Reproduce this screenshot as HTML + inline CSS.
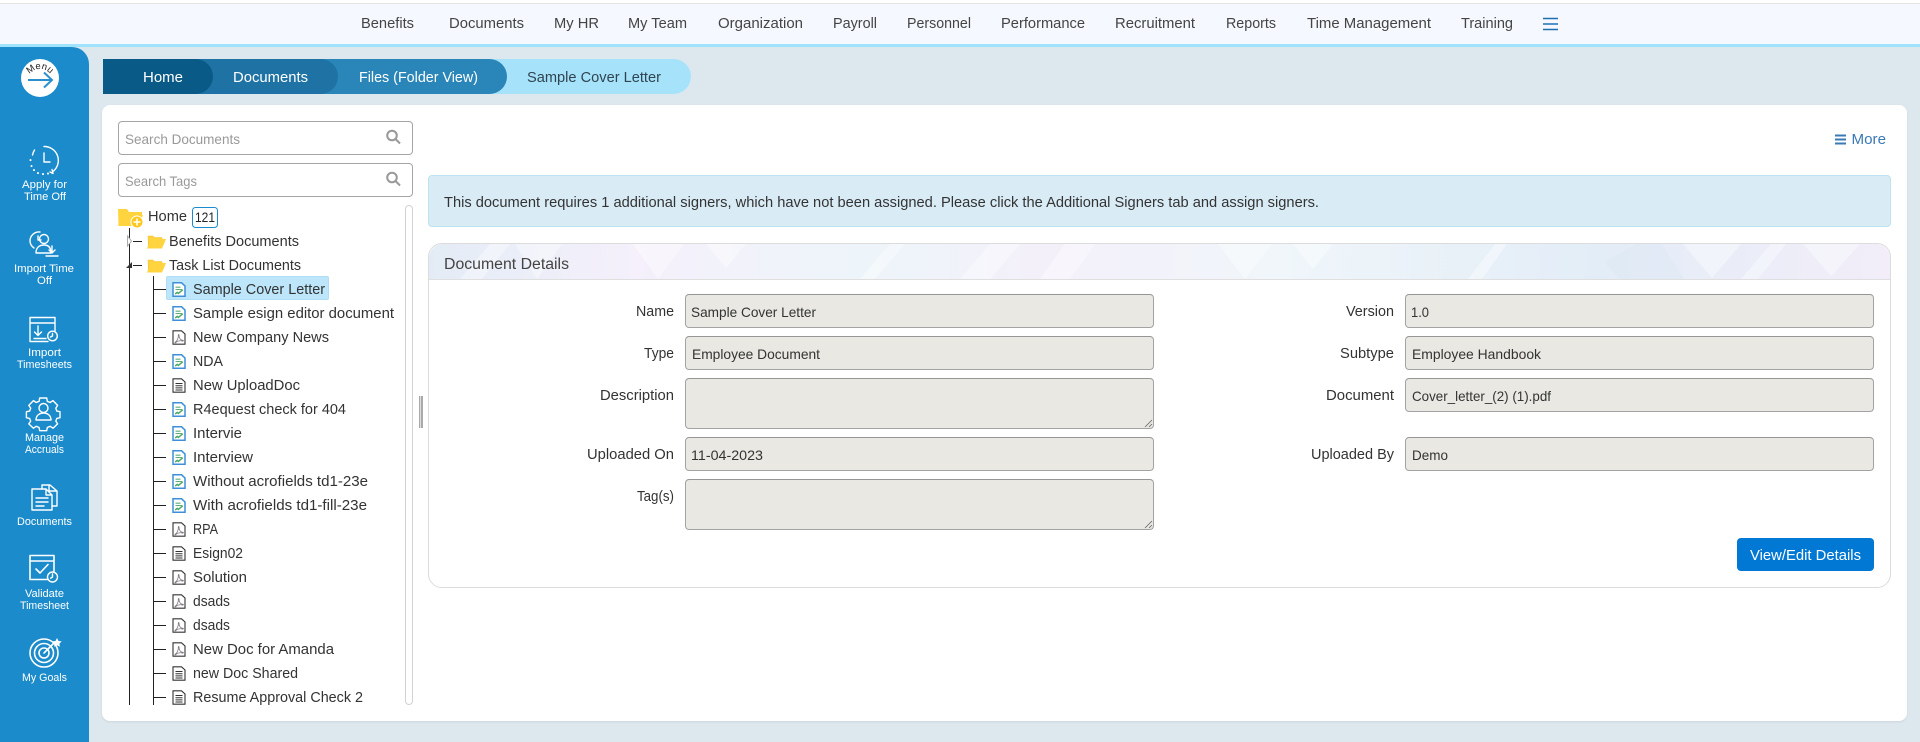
<!DOCTYPE html>
<html lang="en"><head><meta charset="utf-8"><title>Sample Cover Letter</title>
<style>
*{box-sizing:border-box}
html,body{margin:0;padding:0;width:1920px;height:742px;overflow:hidden;background:#dde8ee;font-family:"Liberation Sans",sans-serif}
div{position:absolute}
.in{background:#e9e8e3;border:1px solid #a3a3a3;border-top-color:#969696;border-radius:4px}
.se{background:#fff;border:1px solid #a5a5a5;border-radius:4px;left:118px;width:295px;height:34px}
svg{position:absolute;left:0;top:0}
text{font-family:"Liberation Sans",sans-serif}
</style></head><body>
<div style="left:0;top:0;width:1920px;height:4px;background:#fff;border-bottom:1px solid #e3e3e3"></div>
<div style="left:0;top:4px;width:1920px;height:40px;background:#f5f8fe"></div>
<div style="left:0;top:44px;width:1920px;height:3px;background:#a0e3ff"></div>
<div style="left:0;top:47px;width:89px;height:695px;background:#1b8bcb;border-top-right-radius:17px"></div>
<div style="left:490px;top:59px;width:201px;height:35px;background:#a6e3fb;border-radius:0 18px 18px 0"></div>
<div style="left:320px;top:59px;width:187px;height:35px;background:#2a85b8;border-radius:0 18px 18px 0"></div>
<div style="left:190px;top:59px;width:148px;height:35px;background:#1f73a4;border-radius:0 18px 18px 0"></div>
<div style="left:103px;top:59px;width:110px;height:35px;background:#0a5a87;border-radius:0 18px 18px 0"></div>
<div style="left:102px;top:105px;width:1805px;height:616px;background:#fff;border-radius:8px;box-shadow:0 1px 2px rgba(0,0,0,.08)"></div>
<div class="se" style="top:121px"></div><div class="se" style="top:163px"></div>
<div style="left:405px;top:205px;width:8px;height:500px;background:#fff;border:1px solid #d2d2d2;border-radius:4px"></div>
<div style="left:419px;top:396px;width:4px;height:32px;border-left:1px solid #aaa;border-right:2px solid #aaa;background:#ddd"></div>
<div style="left:166px;top:276px;width:163px;height:24px;background:#bde6fb;border:1px solid #aeddf5;border-radius:2px"></div>
<div style="left:428px;top:175px;width:1463px;height:52px;background:#d9ecf6;border:1px solid #bde3ee;border-radius:4px"></div>
<div style="left:428px;top:243px;width:1463px;height:345px;background:#fff;border:1px solid #dcdcdc;border-radius:14px"></div>
<div class="in" style="left:685px;top:294px;width:469px;height:34px"></div>
<div class="in" style="left:685px;top:336px;width:469px;height:34px"></div>
<div class="in" style="left:685px;top:378px;width:469px;height:51px"></div>
<div class="in" style="left:685px;top:437px;width:469px;height:34px"></div>
<div class="in" style="left:685px;top:479px;width:469px;height:51px"></div>
<div class="in" style="left:1405px;top:294px;width:469px;height:34px"></div>
<div class="in" style="left:1405px;top:336px;width:469px;height:34px"></div>
<div class="in" style="left:1405px;top:378px;width:469px;height:34px"></div>
<div class="in" style="left:1405px;top:437px;width:469px;height:34px"></div>
<div style="left:1737px;top:538px;width:137px;height:33px;background:#0078d4;border-radius:4px"></div>

<svg width="1920" height="742" viewBox="0 0 1920 742">
<defs>
<linearGradient id="hg" x1="0" x2="1" y1="0" y2="0"><stop offset="0" stop-color="#e3ecf6"/><stop offset=".14" stop-color="#f5f0fb"/><stop offset=".3" stop-color="#edf5fa"/><stop offset=".42" stop-color="#f4f0fa"/><stop offset=".58" stop-color="#f0f6fa"/><stop offset=".8" stop-color="#e3edf7"/><stop offset="1" stop-color="#f2edf9"/></linearGradient>
<clipPath id="hc"><path d="M429 279V258a14 14 0 0 1 14-14H1876a14 14 0 0 1 14 14V279Z"/></clipPath>
<clipPath id="tc"><rect x="100" y="200" width="300" height="505"/></clipPath>
<symbol id="g" viewBox="0 0 14 15"><path d="M1 .8h8.500L13 4v10.200H1Z" fill="#fff" stroke="#3e8fd8" stroke-width="1.500"/><path d="M3.500 5.200h5M3.500 7.500h7" stroke="#5cae7a" stroke-width="1.100"/><path d="M3.200 12l2-1.600 1.200 1 4.300-3.600" fill="none" stroke="#4fa864" stroke-width="1.500"/></symbol>
<symbol id="p" viewBox="0 0 14 15"><path d="M1 .8h8.500L13 4v10.200H1Z" fill="#fff" stroke="#333" stroke-width="1.100"/><path d="M3 12.300c2-1 3.500-4 3.300-7-.1-1.200 1-.9.8.4-.3 2.200 1.700 4.600 3.900 4.600.6 0 .5.900-.4.800C7.800 10.300 5 11.300 3.200 13Z" fill="none" stroke="#7d7880" stroke-width=".8"/></symbol>
<symbol id="d" viewBox="0 0 14 15"><path d="M1 .8h8.500L13 4v10.200H1Z" fill="#fff" stroke="#333" stroke-width="1.100"/><path d="M3.500 5.500h7M3.500 7.700h7M3.500 9.900h7M3.500 12h7" stroke="#333"/></symbol>
<symbol id="f" viewBox="0 0 19 15"><path d="M1.500 14L1 2h5l1 1.500h8V6" fill="#ffd43f" stroke="#f0bd28" stroke-width=".5"/><path d="M0 14.500 4 5h15l-4 9.500Z" fill="#ffd43f"/></symbol>
</defs>

<!-- panel header -->
<g clip-path="url(#hc)"><rect x="429" y="244" width="1461" height="35" fill="url(#hg)"/><g fill="#fff" fill-opacity=".38"><path d="M460 279l30-35h20l-28 35Z"/><path d="M515 244l22 35 25-35Z"/><path d="M633 244h51l-26 35Z"/><path d="M706 244h40l-20 24Z"/><path d="M860 279l30-35h15l-30 35Z"/><path d="M960 279l30-35h30l-30 35Z"/><path d="M1040 279l25-35h30l-25 35Z"/><path d="M1218 244h54l-27 35Z"/><path d="M1293 244h40l-20 25Z"/><path d="M1468 279l27-35h12l-25 35Z"/><path d="M1683 244h58l-29 34Z"/><path d="M1741 279l30-35h15l-28 35Z"/><path d="M1803 244h57l-29 32Z"/></g><g fill="#d6e4f2" fill-opacity=".3"><path d="M1620 279l-16-17 32-18h26l22 35Z"/></g></g>
<path d="M429 279.500H1890" stroke="#dfdfdf"/>

<!-- nav -->
<g font-size="14.500" fill="#444">
<text lengthAdjust="spacingAndGlyphs" x="361" y="28" textLength="53">Benefits</text><text lengthAdjust="spacingAndGlyphs" x="449" y="28" textLength="75">Documents</text><text lengthAdjust="spacingAndGlyphs" x="554" y="28" textLength="45">My HR</text><text lengthAdjust="spacingAndGlyphs" x="628" y="28" textLength="59">My Team</text><text lengthAdjust="spacingAndGlyphs" x="718" y="28" textLength="85">Organization</text><text lengthAdjust="spacingAndGlyphs" x="833" y="28" textLength="44">Payroll</text><text lengthAdjust="spacingAndGlyphs" x="907" y="28" textLength="64">Personnel</text><text lengthAdjust="spacingAndGlyphs" x="1001" y="28" textLength="84">Performance</text><text lengthAdjust="spacingAndGlyphs" x="1115" y="28" textLength="80">Recruitment</text><text lengthAdjust="spacingAndGlyphs" x="1226" y="28" textLength="50">Reports</text><text lengthAdjust="spacingAndGlyphs" x="1307" y="28" textLength="124">Time Management</text><text lengthAdjust="spacingAndGlyphs" x="1461" y="28" textLength="52">Training</text>
</g>
<path d="M1543 18.500h15M1543 24h15M1543 29.500h15" stroke="#1f6fb0" stroke-width="1.500"/>

<!-- breadcrumb -->
<g font-size="15" fill="#fff"><text lengthAdjust="spacingAndGlyphs" x="143" y="82" textLength="40">Home</text><text lengthAdjust="spacingAndGlyphs" x="233" y="82" textLength="75">Documents</text><text lengthAdjust="spacingAndGlyphs" x="359" y="82" textLength="119">Files (Folder View)</text><text lengthAdjust="spacingAndGlyphs" x="527" y="82" textLength="134" fill="#2f4450">Sample Cover Letter</text></g>

<!-- sidebar icons -->
<circle cx="40" cy="78" r="19" fill="#fff"/>
<path id="mc" d="M28 77A13 13 0 0 1 52 77" fill="none"/>
<text font-size="9.500" fill="#222"><textPath href="#mc" startOffset="3">Menu</textPath></text>
<path d="M28 80H51M44 72.500 52 80 44 87.500" fill="none" stroke="#2a8fcf" stroke-width="2"/>
<g fill="none" stroke="#fff" stroke-width="1.400" stroke-linecap="round" stroke-linejoin="round">
<path d="M44 146.500a14 14 0 0 1 9 25M34.500 150a14 14 0 0 0-2 5" /><path d="M30.500 160v.1M31.500 166v.1M34 170v.1M38 173v.1M43 174v.1M48 173.500v.1" stroke-width="2"/><path d="M44 153v9h6M50 172l3 1.500-1-4"/>
<path d="M40 232a9 9 0 0 0-10 9 9 9 0 0 0 4 7M38 236v4h3"/><circle cx="44" cy="239" r="4.500"/><path d="M36 253c0-6 4-8 8-8s7 2 7 8Z"/><path d="M52 246v6M49 250l3 3 3-3M46 256h12"/>
<path d="M55 331v-13.500H30v24h18M30 323h25M38 326v9M34.500 332l3.500 3.500 3.500-3.500M34 338.500h12"/><circle cx="52.500" cy="336" r="4.800"/><path d="M52.500 333.500v2.500l-2 1"/>
<path d="M40.500 398.500h7l.6 3.300 2.900 1.200 2.800-1.900 4.600 4.800-1.800 2.800 1 2.900 3.200.6v6l-3.200.7-1 2.700 1.800 2.800-4.600 4.300-2.800-1.900-2.900 1.200-.6 3.200h-7l-.6-3.200-2.900-1.200-2.800 1.900-4.600-4.300 1.900-2.800-1.100-2.700-3.200-.7v-6l3.200-.6 1.100-2.900-1.900-2.800 4.600-4.800 2.800 1.900 2.900-1.200Z" transform="translate(0 -.5) translate(-.8 0)"/><circle cx="43.500" cy="408" r="4.500"/><path d="M36 420c0-5 4-7 7.500-7s7.500 2 7.500 7Z"/>
<path d="M42 489v-4h8l7 6v15h-5M49 485v6h8"/><path d="M32 489h14l6 6v15H32Z M46 489v6h6M36 498h12M36 502h12M36 506h8"/>
<path d="M54 571v-15.500H30v24h18M30 561h24M36 569l4 4 8-8.500" stroke-width="1.600"/><circle cx="52.500" cy="577" r="5"/><path d="M52.500 574v3l-1.800 1.200"/>
<circle cx="44" cy="653" r="14" stroke-width="1.600"/><circle cx="44" cy="653" r="9.500" stroke-width="1.600"/><circle cx="44" cy="653" r="5" stroke-width="1.600"/><path d="M44 653 55 642" stroke-width="1.600"/>
</g>
<path d="M57 638l1.500 3 3.200.4-2.300 2.200.5 3.200-2.900-1.500-2.900 1.500.5-3.200-2.300-2.200 3.200-.4Z" fill="#fff"/>
<g font-size="11" fill="#fff">
<text lengthAdjust="spacingAndGlyphs" x="22" y="188" textLength="45">Apply for</text><text lengthAdjust="spacingAndGlyphs" x="24" y="200" textLength="42">Time Off</text><text lengthAdjust="spacingAndGlyphs" x="14" y="272" textLength="60">Import Time</text><text lengthAdjust="spacingAndGlyphs" x="37" y="284" textLength="15">Off</text><text lengthAdjust="spacingAndGlyphs" x="28" y="356" textLength="33">Import</text><text lengthAdjust="spacingAndGlyphs" x="17" y="368" textLength="55">Timesheets</text><text lengthAdjust="spacingAndGlyphs" x="25" y="441" textLength="39">Manage</text><text lengthAdjust="spacingAndGlyphs" x="25" y="453" textLength="39">Accruals</text><text lengthAdjust="spacingAndGlyphs" x="17" y="525" textLength="55">Documents</text><text lengthAdjust="spacingAndGlyphs" x="25" y="597" textLength="39">Validate</text><text lengthAdjust="spacingAndGlyphs" x="20" y="609" textLength="49">Timesheet</text><text lengthAdjust="spacingAndGlyphs" x="22" y="681" textLength="45">My Goals</text>
</g>

<!-- search -->
<g font-size="14" fill="#999"><text lengthAdjust="spacingAndGlyphs" x="125" y="144" textLength="115">Search Documents</text><text lengthAdjust="spacingAndGlyphs" x="125" y="186" textLength="72">Search Tags</text></g>
<g fill="none" stroke="#999" stroke-width="2"><circle cx="392" cy="135.500" r="4.800"/><path d="M395.500 139 400 143.500"/><circle cx="392" cy="177.500" r="4.800"/><path d="M395.500 181 400 185.500"/></g>

<!-- tree -->
<g clip-path="url(#tc)">
<g stroke="#222" fill="none"><path d="M129.500 228V705M153.500 276V705M133 241.500h9M133 265.500h9"/><path d="M153 289.500h13M153 313.500h13M153 337.500h13M153 361.500h13M153 385.500h13M153 409.500h13M153 433.500h13M153 457.500h13M153 481.500h13M153 505.500h13M153 529.500h13M153 553.500h13M153 577.500h13M153 601.500h13M153 625.500h13M153 649.500h13M153 673.500h13M153 697.500h13"/></g>
<path d="M127.500 236v10l4-5Z" fill="#fff" stroke="#aaa"/><path d="M126 268h6v-6Z" fill="#333"/>
<use href="#f" x="147" y="234" width="19" height="15"/><use href="#f" x="147" y="258" width="19" height="15"/>
<use href="#g" x="172" y="282" width="14" height="15"/><use href="#g" x="172" y="306" width="14" height="15"/><use href="#p" x="172" y="330" width="14" height="15"/><use href="#g" x="172" y="354" width="14" height="15"/><use href="#d" x="172" y="378" width="14" height="15"/><use href="#g" x="172" y="402" width="14" height="15"/><use href="#g" x="172" y="426" width="14" height="15"/><use href="#g" x="172" y="450" width="14" height="15"/><use href="#g" x="172" y="474" width="14" height="15"/><use href="#g" x="172" y="498" width="14" height="15"/><use href="#p" x="172" y="522" width="14" height="15"/><use href="#d" x="172" y="546" width="14" height="15"/><use href="#p" x="172" y="570" width="14" height="15"/><use href="#p" x="172" y="594" width="14" height="15"/><use href="#p" x="172" y="618" width="14" height="15"/><use href="#p" x="172" y="642" width="14" height="15"/><use href="#d" x="172" y="666" width="14" height="15"/><use href="#d" x="172" y="690" width="14" height="15"/>
<g font-size="14.500" fill="#333">
<text lengthAdjust="spacingAndGlyphs" x="169" y="246" textLength="130">Benefits Documents</text><text lengthAdjust="spacingAndGlyphs" x="169" y="270" textLength="132">Task List Documents</text>
<text lengthAdjust="spacingAndGlyphs" x="193" y="294" textLength="132">Sample Cover Letter</text><text lengthAdjust="spacingAndGlyphs" x="193" y="318" textLength="201">Sample esign editor document</text><text lengthAdjust="spacingAndGlyphs" x="193" y="342" textLength="136">New Company News</text><text lengthAdjust="spacingAndGlyphs" x="193" y="366" textLength="30">NDA</text><text lengthAdjust="spacingAndGlyphs" x="193" y="390" textLength="107">New UploadDoc</text><text lengthAdjust="spacingAndGlyphs" x="193" y="414" textLength="153">R4equest check for 404</text><text lengthAdjust="spacingAndGlyphs" x="193" y="438" textLength="49">Intervie</text><text lengthAdjust="spacingAndGlyphs" x="193" y="462" textLength="60">Interview</text><text lengthAdjust="spacingAndGlyphs" x="193" y="486" textLength="175">Without acrofields td1-23e</text><text lengthAdjust="spacingAndGlyphs" x="193" y="510" textLength="174">With acrofields td1-fill-23e</text><text lengthAdjust="spacingAndGlyphs" x="193" y="534" textLength="25">RPA</text><text lengthAdjust="spacingAndGlyphs" x="193" y="558" textLength="50">Esign02</text><text lengthAdjust="spacingAndGlyphs" x="193" y="582" textLength="54">Solution</text><text lengthAdjust="spacingAndGlyphs" x="193" y="606" textLength="37">dsads</text><text lengthAdjust="spacingAndGlyphs" x="193" y="630" textLength="37">dsads</text><text lengthAdjust="spacingAndGlyphs" x="193" y="654" textLength="141">New Doc for Amanda</text><text lengthAdjust="spacingAndGlyphs" x="193" y="678" textLength="105">new Doc Shared</text><text lengthAdjust="spacingAndGlyphs" x="193" y="702" textLength="170">Resume Approval Check 2</text>
</g>
</g>
<path d="M118.500 226 118 209h9l2 3h13v3" fill="#ffd43f"/><path d="M118 226l5-11h20l-4 11Z" fill="#ffd43f"/><circle cx="137" cy="222" r="6" fill="#ffc81e" stroke="#fff"/><path d="M133.500 222h7M137 218.500v7" stroke="#fff" stroke-width="1.500"/>
<text lengthAdjust="spacingAndGlyphs" x="148" y="221" font-size="15" fill="#333" textLength="39">Home</text>
<rect x="192.500" y="207.500" width="25" height="20" rx="3" fill="#fff" stroke="#1b8bd0"/><text lengthAdjust="spacingAndGlyphs" x="195" y="222" font-size="13.500" fill="#222" textLength="20">121</text>

<!-- right content -->
<path d="M1835 135.500h11M1835 139.500h11M1835 143.500h11" stroke="#3a7ab5" stroke-width="2"/>
<text lengthAdjust="spacingAndGlyphs" x="1851.500" y="144" font-size="15" fill="#3a7ab5" textLength="34.500">More</text>
<text lengthAdjust="spacingAndGlyphs" x="444" y="207" font-size="14.800" fill="#333" textLength="875">This document requires 1 additional signers, which have not been assigned. Please click the Additional Signers tab and assign signers.</text>
<text lengthAdjust="spacingAndGlyphs" x="444" y="269" font-size="15.500" fill="#444" textLength="125">Document Details</text>
<g font-size="14.500" fill="#333">
<text lengthAdjust="spacingAndGlyphs" x="636" y="316" textLength="38">Name</text><text lengthAdjust="spacingAndGlyphs" x="644" y="358" textLength="30">Type</text><text lengthAdjust="spacingAndGlyphs" x="600" y="400" textLength="74">Description</text><text lengthAdjust="spacingAndGlyphs" x="587" y="459" textLength="87">Uploaded On</text><text lengthAdjust="spacingAndGlyphs" x="637" y="501" textLength="37">Tag(s)</text>
<text lengthAdjust="spacingAndGlyphs" x="1346" y="316" textLength="48">Version</text><text lengthAdjust="spacingAndGlyphs" x="1340" y="358" textLength="54">Subtype</text><text lengthAdjust="spacingAndGlyphs" x="1326" y="400" textLength="68">Document</text><text lengthAdjust="spacingAndGlyphs" x="1311" y="459" textLength="83">Uploaded By</text>
</g>
<g font-size="14" fill="#333">
<text lengthAdjust="spacingAndGlyphs" x="691" y="317" textLength="125">Sample Cover Letter</text><text lengthAdjust="spacingAndGlyphs" x="692" y="359" textLength="128">Employee Document</text><text lengthAdjust="spacingAndGlyphs" x="691" y="460" textLength="72">11-04-2023</text>
<text lengthAdjust="spacingAndGlyphs" x="1411" y="317" textLength="18">1.0</text><text lengthAdjust="spacingAndGlyphs" x="1412" y="359" textLength="129">Employee Handbook</text><text lengthAdjust="spacingAndGlyphs" x="1412" y="401" textLength="139">Cover_letter_(2) (1).pdf</text><text lengthAdjust="spacingAndGlyphs" x="1412" y="460" textLength="36">Demo</text>
</g>
<g stroke="#666" stroke-width=".8"><path d="M1145 427l7-7M1149 427l3-3"/><path d="M1145 528l7-7M1149 528l3-3"/></g>
<text lengthAdjust="spacingAndGlyphs" x="1750" y="560" font-size="14.800" fill="#fff" textLength="111">View/Edit Details</text>
</svg>
</body></html>
